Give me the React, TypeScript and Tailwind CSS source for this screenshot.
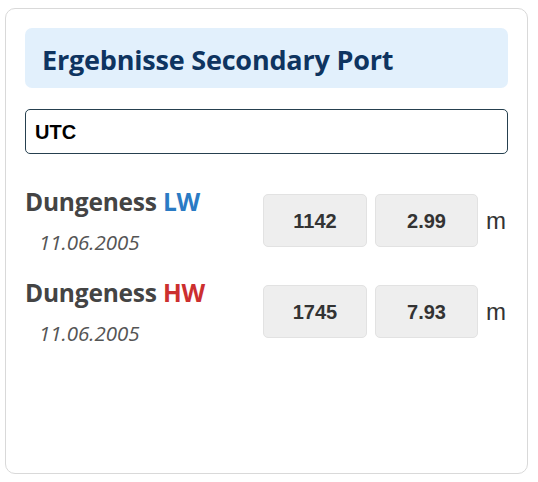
import React from "react";

const rows = [
  { port: "Dungeness", tag: "LW", color: "text-[#2a7bc4]", date: "11.06.2005", time: "1142", height: "2.99" },
  { port: "Dungeness", tag: "HW", color: "text-[#cc2f2f]", date: "11.06.2005", time: "1745", height: "7.93" },
];

export default function App() {
  return (
    <div className="w-[538px] h-[482px] bg-white pl-[5px] pt-[8px]">
      <div className="w-[523px] h-[466px] border border-[#d9d9d9] rounded-[10px] p-[19px] bg-white">
        <div className="h-[60px] rounded-[7px] bg-[#e2f0fc] flex items-center pl-[17px] pt-[2px]">
          <h1 className="text-[27px] font-bold text-[#0e3460] font-['Open_Sans',sans-serif] leading-none tracking-[-0.2px]">
            Ergebnisse Secondary Port
          </h1>
        </div>
        <div className="mt-[21px] h-[45px] border-[1.5px] border-[#26404f] rounded-[5px] flex items-center pl-[9px]">
          <span className="text-[20px] font-bold text-black font-['Liberation_Sans',Arial,sans-serif]">UTC</span>
        </div>
        <div className="mt-[32px] flex flex-col gap-[22px]">
          {rows.map((r, i) => (
            <div key={i} className="flex items-center justify-between">
              <div className="flex flex-col">
                <div className="h-[32px] leading-[32px] text-[24.5px] font-bold font-['Open_Sans',sans-serif] text-[#444444] tracking-[-0.2px]">
                  {r.port} <span className={r.color}>{r.tag}</span>
                </div>
                <div className="mt-[11px] h-[26px] leading-[26px] pl-[14px] text-[20.5px] italic text-[#555555] font-['Open_Sans',sans-serif]">
                  {r.date}
                </div>
              </div>
              <div className="flex items-center">
                <div className="w-[104px] h-[53px] rounded-[5px] bg-[#eeeeee] border border-[#e2e2e2] flex items-center justify-center text-[20px] font-bold text-[#333333] font-['Liberation_Sans',Arial,sans-serif]">
                  {r.time}
                </div>
                <div className="ml-[8px] w-[103px] h-[53px] rounded-[5px] bg-[#eeeeee] border border-[#e2e2e2] flex items-center justify-center text-[20px] font-bold text-[#333333] font-['Liberation_Sans',Arial,sans-serif]">
                  {r.height}
                </div>
                <div className="ml-[8px] w-[22px] text-[24px] leading-none text-[#333333] font-['Liberation_Sans',Arial,sans-serif]">m</div>
              </div>
            </div>
          ))}
        </div>
      </div>
    </div>
  );
}
